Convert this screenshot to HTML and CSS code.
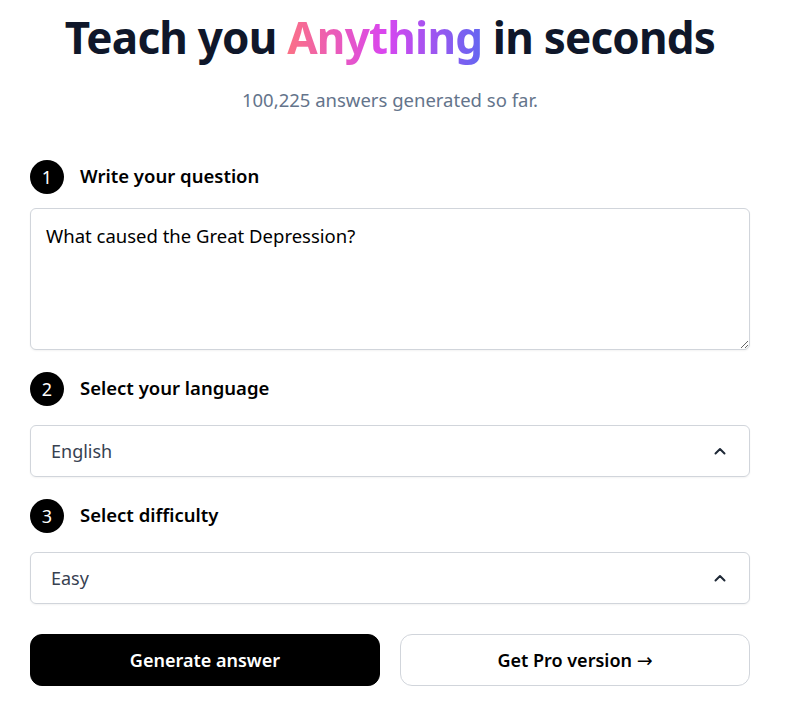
FILE: index.html
```html
<!DOCTYPE html>
<html lang="en">
<head>
<meta charset="utf-8">
<title>Teach you Anything</title>
<link rel="stylesheet" href="styles.css">
</head>
<body>
<main class="page">
  <h1 class="title">Teach you <span class="grad">Anything</span> in seconds</h1>
  <p class="count">100,225 answers generated so far.</p>

  <div class="step step-first">
    <span class="num">1</span>
    <span class="label">Write your question</span>
  </div>
  <textarea class="question" rows="4">What caused the Great Depression?</textarea>

  <div class="step">
    <span class="num">2</span>
    <span class="label">Select your language</span>
  </div>
  <div class="select">
    <span class="value">English</span>
    <svg class="chev" width="14" height="14" viewBox="0 0 14 14" aria-hidden="true"><path d="M2.5 9.5 L7 5 L11.5 9.5" fill="none" stroke="#1f2937" stroke-width="2" stroke-linecap="round" stroke-linejoin="round"/></svg>
  </div>

  <div class="step">
    <span class="num">3</span>
    <span class="label">Select difficulty</span>
  </div>
  <div class="select">
    <span class="value">Easy</span>
    <svg class="chev" width="14" height="14" viewBox="0 0 14 14" aria-hidden="true"><path d="M2.5 9.5 L7 5 L11.5 9.5" fill="none" stroke="#1f2937" stroke-width="2" stroke-linecap="round" stroke-linejoin="round"/></svg>
  </div>

  <div class="actions">
    <button class="btn btn-dark">Generate answer</button>
    <button class="btn btn-light">Get Pro version <span class="arrow">→</span></button>
  </div>
</main>
</body>
</html>
```

FILE: styles.css
```css
* { box-sizing: border-box; }
html, body { margin: 0; padding: 0; background: #fff; }
body {
  font-family: "Noto Sans", "Open Sans", sans-serif;
  color: #000;
}
.page {
  width: 720px;
  margin: 0 30px;
  padding-top: 9px;
  display: flex;
  flex-direction: column;
}
.title {
  margin: 0;
  text-align: center;
  font-size: 44px;
  line-height: 56px;
  font-weight: 700;
  color: #0f172a;
  letter-spacing: -0.8px;
}
.grad {
  background: linear-gradient(90deg, #fb7185 0%, #d946ef 50%, #6366f1 100%);
  -webkit-background-clip: text;
  background-clip: text;
  color: transparent;
}
.count {
  margin: 21px 0 0;
  text-align: center;
  font-size: 18.5px;
  line-height: 28px;
  color: #64748b;
}
.step {
  display: flex;
  align-items: center;
  gap: 16px;
  margin-top: 22px;
  margin-bottom: 19px;
}
.step-first { margin-top: 46px; margin-bottom: 14px; }
.num {
  width: 34px;
  height: 34px;
  border-radius: 50%;
  background: #000;
  color: #fff;
  display: flex;
  align-items: center;
  justify-content: center;
  font-size: 18px;
  font-weight: 400;
}
.label {
  font-size: 18.5px;
  line-height: 24px;
  margin-top: -2px;
  font-weight: 600;
  color: #000;
}
.question {
  display: block;
  width: 720px;
  height: 142px;
  margin: 0;
  padding: 13px 15px;
  border: 1px solid #d1d5db;
  border-radius: 6px;
  font-family: inherit;
  font-size: 18.5px;
  line-height: 28px;
  color: #000;
  resize: vertical;
  box-shadow: 0 1px 2px rgba(0,0,0,0.05);
}
.select {
  height: 52px;
  border: 1px solid #d1d5db;
  border-radius: 6px;
  display: flex;
  align-items: center;
  justify-content: space-between;
  padding: 0 22px 0 20px;
  box-shadow: 0 1px 2px rgba(0,0,0,0.05);
}
.value {
  font-size: 18px;
  color: #374151;
}
.chev { display: block; }
.actions {
  display: grid;
  grid-template-columns: 1fr 1fr;
  gap: 20px;
  margin-top: 30px;
}
.btn {
  height: 52px;
  border-radius: 12px;
  font-family: inherit;
  font-size: 18px;
  font-weight: 600;
  cursor: pointer;
}
.arrow {
  font-family: "DejaVu Sans", sans-serif;
  font-weight: 400;
  font-size: 19px;
}
.btn-dark {
  background: #000;
  color: #fff;
  border: 1px solid #000;
}
.btn-light {
  background: #fff;
  color: #000;
  border: 1px solid #d1d5db;
}
```
